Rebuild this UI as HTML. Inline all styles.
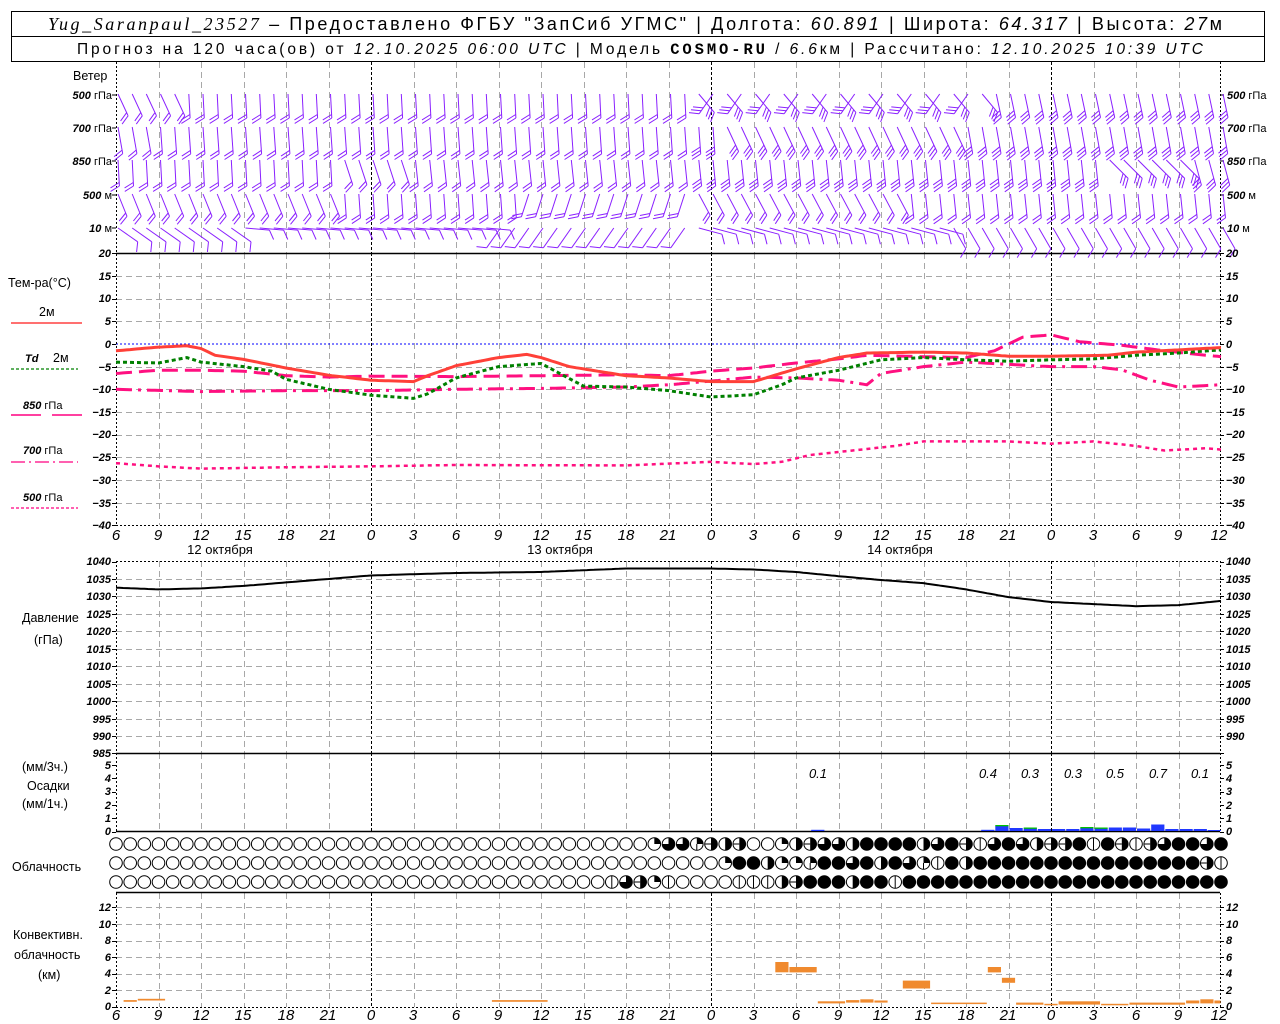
<!DOCTYPE html>
<html><head><meta charset="utf-8">
<style>
html,body{margin:0;padding:0;background:#fff;}
svg{display:block;}
text{font-family:"Liberation Sans",sans-serif;fill:#000;}
.ax{font-size:11px;font-style:italic;font-weight:bold;}
.hr{font-size:15px;font-style:italic;}
.lb{font-size:12.5px;}
</style></head>
<body>
<svg id="sv" width="1280" height="1024" viewBox="0 0 1280 1024">
<rect width="1280" height="1024" fill="#fff"/>
<g id="g"></g>
<!-- header -->
<rect x="11.5" y="11.5" width="1253" height="50" fill="none" stroke="#000"/>
<line x1="11.5" y1="36.5" x2="1264.5" y2="36.5" stroke="#000"/>
<text x="48" y="30" font-size="18" textLength="1174" lengthAdjust="spacing"><tspan font-family="Liberation Serif" font-style="italic">Yug_Saranpaul_23527</tspan> – Предоставлено ФГБУ "ЗапСиб УГМС" | Долгота: <tspan font-style="italic">60.891</tspan> | Широта: <tspan font-style="italic">64.317</tspan> | Высота: <tspan font-style="italic">27</tspan>м</text>
<text x="77" y="54" font-size="15.5" textLength="1126" lengthAdjust="spacing">Прогноз на 120 часа(ов) от <tspan font-style="italic">12.10.2025 06:00 UTC</tspan>  | Модель <tspan font-family="Liberation Mono" font-weight="bold">COSMO-RU</tspan> / <tspan font-style="italic">6.6</tspan>км | Рассчитано: <tspan font-style="italic">12.10.2025 10:39 UTC</tspan></text>

<!-- wind labels -->
<text class="lb" x="73" y="80">Ветер</text>
<g class="ax" text-anchor="end">
<text x="112" y="99">500 <tspan font-style="normal" font-weight="normal">гПа</tspan></text>
<text x="112" y="132">700 <tspan font-style="normal" font-weight="normal">гПа</tspan></text>
<text x="112" y="165">850 <tspan font-style="normal" font-weight="normal">гПа</tspan></text>
<text x="112" y="199">500 <tspan font-style="normal" font-weight="normal">м</tspan></text>
<text x="112" y="232">10  <tspan font-style="normal" font-weight="normal">м</tspan></text>
</g>
<g class="ax">
<text x="1227" y="99">500 <tspan font-style="normal" font-weight="normal">гПа</tspan></text>
<text x="1227" y="132">700 <tspan font-style="normal" font-weight="normal">гПа</tspan></text>
<text x="1227" y="165">850 <tspan font-style="normal" font-weight="normal">гПа</tspan></text>
<text x="1227" y="199">500 <tspan font-style="normal" font-weight="normal">м</tspan></text>
<text x="1227" y="232">10  <tspan font-style="normal" font-weight="normal">м</tspan></text>
</g>

<!-- temp legend -->
<text class="lb" x="8" y="287" font-size="13">Тем-ра(°С)</text>
<text class="lb" x="39" y="316" font-size="11">2м</text>
<line x1="11" y1="323" x2="82" y2="323" stroke="#ff4040" stroke-width="1.5"/>
<text x="25" y="362" font-size="11" font-style="italic" font-weight="bold" font-family="Liberation Serif">Td</text><text class="lb" x="53" y="362" font-size="11">2м</text>
<line x1="11" y1="369" x2="78" y2="369" stroke="#008000" stroke-width="1.2" stroke-dasharray="3,2"/>
<text class="ax" x="23" y="409">850 <tspan font-style="normal" font-weight="normal">гПа</tspan></text>
<line x1="11" y1="415" x2="41" y2="415" stroke="#ff0080" stroke-width="1.5"/><line x1="52" y1="415" x2="82" y2="415" stroke="#ff0080" stroke-width="1.5"/>
<text class="ax" x="23" y="454">700 <tspan font-style="normal" font-weight="normal">гПа</tspan></text>
<line x1="11" y1="462" x2="78" y2="462" stroke="#ff0080" stroke-width="1.2" stroke-dasharray="14,4,2,4"/>
<text class="ax" x="23" y="501">500 <tspan font-style="normal" font-weight="normal">гПа</tspan></text>
<line x1="11" y1="508" x2="78" y2="508" stroke="#ff0080" stroke-width="1.2" stroke-dasharray="3,2"/>

<!-- temp axis labels -->
<g class="ax" text-anchor="end">
<text x="111" y="257">20</text><text x="111" y="280">15</text><text x="111" y="302">10</text><text x="111" y="325">5</text><text x="111" y="348">0</text><text x="111" y="371">−5</text><text x="111" y="393">−10</text><text x="111" y="416">−15</text><text x="111" y="438">−20</text><text x="111" y="461">−25</text><text x="111" y="484">−30</text><text x="111" y="507">−35</text><text x="111" y="529">−40</text>
</g>
<g class="ax">
<text x="1226" y="257">20</text><text x="1226" y="280">15</text><text x="1226" y="302">10</text><text x="1226" y="325">5</text><text x="1226" y="348">0</text><text x="1226" y="371">−5</text><text x="1226" y="393">−10</text><text x="1226" y="416">−15</text><text x="1226" y="438">−20</text><text x="1226" y="461">−25</text><text x="1226" y="484">−30</text><text x="1226" y="507">−35</text><text x="1226" y="529">−40</text>
</g>
<!-- hour labels temp -->
<g class="hr" text-anchor="middle">
<text x="116" y="540">6</text><text x="158" y="540">9</text><text x="201" y="540">12</text><text x="243" y="540">15</text><text x="286" y="540">18</text><text x="328" y="540">21</text><text x="371" y="540">0</text><text x="413" y="540">3</text><text x="456" y="540">6</text><text x="498" y="540">9</text><text x="541" y="540">12</text><text x="583" y="540">15</text><text x="626" y="540">18</text><text x="668" y="540">21</text><text x="711" y="540">0</text><text x="753" y="540">3</text><text x="796" y="540">6</text><text x="838" y="540">9</text><text x="881" y="540">12</text><text x="923" y="540">15</text><text x="966" y="540">18</text><text x="1008" y="540">21</text><text x="1051" y="540">0</text><text x="1093" y="540">3</text><text x="1136" y="540">6</text><text x="1178" y="540">9</text><text x="1219" y="540">12</text>
</g>
<g font-size="13" text-anchor="middle">
<text x="220" y="554">12 октября</text><text x="560" y="554">13 октября</text><text x="900" y="554">14 октября</text>
</g>

<!-- pressure -->
<text class="lb" x="22" y="622">Давление</text>
<text class="lb" x="34" y="644">(гПа)</text>
<g class="ax" text-anchor="end">
<text x="111" y="565">1040</text><text x="111" y="583">1035</text><text x="111" y="600">1030</text><text x="111" y="618">1025</text><text x="111" y="635">1020</text><text x="111" y="653">1015</text><text x="111" y="670">1010</text><text x="111" y="688">1005</text><text x="111" y="705">1000</text><text x="111" y="723">995</text><text x="111" y="740">990</text><text x="111" y="757">985</text>
</g>
<g class="ax">
<text x="1226" y="565">1040</text><text x="1226" y="583">1035</text><text x="1226" y="600">1030</text><text x="1226" y="618">1025</text><text x="1226" y="635">1020</text><text x="1226" y="653">1015</text><text x="1226" y="670">1010</text><text x="1226" y="688">1005</text><text x="1226" y="705">1000</text><text x="1226" y="723">995</text><text x="1226" y="740">990</text>
</g>

<!-- precip -->
<text class="lb" x="22" y="771">(мм/3ч.)</text>
<text class="lb" x="27" y="790">Осадки</text>
<text class="lb" x="22" y="808">(мм/1ч.)</text>
<g class="ax" text-anchor="end">
<text x="111" y="769">5</text><text x="111" y="782">4</text><text x="111" y="795">3</text><text x="111" y="809">2</text><text x="111" y="822">1</text><text x="111" y="835">0</text>
</g>
<g class="ax">
<text x="1226" y="769">5</text><text x="1226" y="782">4</text><text x="1226" y="795">3</text><text x="1226" y="809">2</text><text x="1226" y="822">1</text><text x="1226" y="835">0</text>
</g>
<g font-size="13" font-style="italic" text-anchor="middle">
<text x="818" y="778">0.1</text><text x="988" y="778">0.4</text><text x="1030" y="778">0.3</text><text x="1073" y="778">0.3</text><text x="1115" y="778">0.5</text><text x="1158" y="778">0.7</text><text x="1200" y="778">0.1</text>
</g>

<text class="lb" x="12" y="871">Облачность</text>

<!-- conv -->
<text class="lb" x="13" y="939">Конвективн.</text>
<text class="lb" x="14" y="959">облачность</text>
<text class="lb" x="38" y="979">(км)</text>
<g class="ax" text-anchor="end">
<text x="111" y="911">12</text><text x="111" y="928">10</text><text x="111" y="944">8</text><text x="111" y="961">6</text><text x="111" y="977">4</text><text x="111" y="994">2</text><text x="111" y="1010">0</text>
</g>
<g class="ax">
<text x="1226" y="911">12</text><text x="1226" y="928">10</text><text x="1226" y="944">8</text><text x="1226" y="961">6</text><text x="1226" y="977">4</text><text x="1226" y="994">2</text><text x="1226" y="1010">0</text>
</g>
<g class="hr" text-anchor="middle">
<text x="116" y="1020">6</text><text x="158" y="1020">9</text><text x="201" y="1020">12</text><text x="243" y="1020">15</text><text x="286" y="1020">18</text><text x="328" y="1020">21</text><text x="371" y="1020">0</text><text x="413" y="1020">3</text><text x="456" y="1020">6</text><text x="498" y="1020">9</text><text x="541" y="1020">12</text><text x="583" y="1020">15</text><text x="626" y="1020">18</text><text x="668" y="1020">21</text><text x="711" y="1020">0</text><text x="753" y="1020">3</text><text x="796" y="1020">6</text><text x="838" y="1020">9</text><text x="881" y="1020">12</text><text x="923" y="1020">15</text><text x="966" y="1020">18</text><text x="1008" y="1020">21</text><text x="1051" y="1020">0</text><text x="1093" y="1020">3</text><text x="1136" y="1020">6</text><text x="1178" y="1020">9</text><text x="1219" y="1020">12</text>
</g>
</svg>
<script>
(function(){
var X=function(h){return 116+h*14.1667;};
var s='';
function L(x1,y1,x2,y2,c,w,d){s+='<line x1="'+x1+'" y1="'+y1+'" x2="'+x2+'" y2="'+y2+'" stroke="'+c+'" stroke-width="'+(w||1)+'"'+(d?' stroke-dasharray="'+d+'"':'')+'/>';}
var spans=[[62,253],[253,525],[561,753],[753,831],[893,1007]];
var k,h,x,y,i;
for(k=0;k<=26;k++){h=3*k;x=Math.round(X(h))+0.5;var day=(h==18||h==42||h==66);
 if(k==0||k==26)continue;
 spans.forEach(function(sp){L(x,sp[0],x,sp[1],day?'#000':'#a8a8a8',1,day?'3,2':'6,4');});}
var Ty=function(t){return 253.3+(20-t)*4.533;};
for(k=15;k>=-35;k-=5){y=Math.round(Ty(k))+0.5; if(k==0)continue; L(116,y,1220,y,'#a8a8a8',1,'6,4');}
L(116,344,1220,344,'#0000ff',1,'2,2');
L(116,253.5,1220,253.5,'#000',1.5);
L(116,525.5,1220,525.5,'#000',1,'2,2');
var Py=function(p){return 561.5+(1040-p)*3.49;};
for(k=1035;k>=990;k-=5){y=Math.round(Py(k))+0.5;L(116,y,1220,y,'#a8a8a8',1,'6,4');}
L(116,561.5,1220,561.5,'#000',1,'2,2');
L(116,753.5,1220,753.5,'#000',1.5);
L(116,831.5,1220,831.5,'#000',1.5);
L(116,892.5,1220,892.5,'#000',1.5);
var Cy=function(c){return 1006.7-c*8.27;};
for(k=2;k<=12;k+=2){y=Math.round(Cy(k))+0.5;L(116,y,1220,y,'#a8a8a8',1,'6,4');}
L(116,1007.5,1220,1007.5,'#000',1,'2,2');
[116.5,1220.5].forEach(function(ax){
 [[62,525],[561,831],[893,1007]].forEach(function(sp){L(ax,sp[0],ax,sp[1],'#000',1,'2,2');});});
function ticks(vals,fy){vals.forEach(function(v){var yy=Math.round(fy(v))+0.5;L(112,yy,116,yy,'#000');L(1220,yy,1224,yy,'#000');});}
ticks([20,15,10,5,0,-5,-10,-15,-20,-25,-30,-35,-40],Ty);
ticks([1040,1035,1030,1025,1020,1015,1010,1005,1000,995,990,985],Py);
ticks([0,1,2,3,4,5],function(v){return 831.5-v*13.3;});
ticks([0,2,4,6,8,10,12],Cy);
[95,128,161,195,228].forEach(function(yy){L(112,yy,116,yy,'#000');L(1220,yy,1224,yy,'#000');});

function interp(a,h){for(var j=0;j<a.length-1;j++){if(h>=a[j][0]&&h<=a[j+1][0]){var f=(h-a[j][0])/(a[j+1][0]-a[j][0]||1);return a[j][1]+f*(a[j+1][1]-a[j][1]);}}return a[a.length-1][1];}
function curve(a,fy,c,w,d){var p=[];for(var hh=a[0][0];hh<=a[a.length-1][0]+0.001;hh+=0.25){p.push(X(hh).toFixed(1)+','+fy(interp(a,hh)).toFixed(1));}
 s+='<polyline fill="none" points="'+p.join(' ')+'" stroke="'+c+'" stroke-width="'+w+'"'+(d?' stroke-dasharray="'+d+'"':'')+'/>';}
var t500=[[0,-26.3],[3,-27],[6,-27.5],[12,-27.2],[18,-27],[24,-26.7],[36,-26.8],[42,-26],[45,-26.5],[47,-26],[49,-24.5],[52,-23.5],[55,-22.5],[57,-21.5],[63,-21.5],[66,-22],[69,-21.5],[72,-22.5],[74,-23.5],[77,-23],[78,-23.3]];
var t700=[[0,-10],[6,-10.5],[12,-10.3],[18,-10.3],[24,-10],[30,-9.8],[36,-9.5],[39,-9],[42,-8.2],[45,-7.3],[48,-7.5],[51,-8],[53,-9],[54,-6.5],[57,-5],[60,-4],[63,-4.5],[66,-5],[69,-5],[71,-5.7],[73,-8],[75,-9.5],[78,-9]];
var t850=[[0,-6.5],[3,-5.8],[6,-5.8],[9,-6],[12,-7],[15,-7.3],[18,-7.1],[24,-7.2],[30,-7],[36,-6.8],[39,-7],[42,-6],[45,-5.3],[48,-4.2],[51,-3.3],[53,-2.5],[57,-2.8],[60,-3],[62,-1.5],[64,1.5],[66,2],[68,0.5],[71,-0.3],[74,-1.5],[76,-2.2],[78,-2.8]];
var td=[[0,-4],[3,-4.2],[5,-3],[6,-4],[9,-5],[11,-6],[12,-7.8],[15,-10],[18,-11.3],[21,-12],[22,-11],[24,-7.5],[27,-5],[30,-4.3],[33,-9.3],[36,-9.5],[39,-10.3],[42,-11.7],[45,-11.2],[47,-9],[48,-7.5],[51,-5.8],[54,-3.5],[57,-3],[60,-3.5],[63,-3.8],[66,-3.5],[69,-3.3],[72,-2.5],[75,-2],[78,-1.3]];
var t2=[[0,-1.5],[3,-0.7],[5,-0.4],[6,-1],[7,-2.5],[9,-3.4],[12,-5.3],[15,-6.9],[18,-8],[21,-8.3],[22,-7],[24,-4.8],[27,-3],[29,-2.3],[30,-3],[32,-5],[36,-7],[39,-7.5],[42,-8.3],[45,-8.3],[48,-5.5],[51,-3],[53,-2],[57,-1.8],[60,-2],[63,-2.7],[66,-2.7],[70,-2.5],[72,-1.8],[75,-1.3],[78,-0.8]];
curve(t500,Ty,'#ff1080',2.5,'4,4');
curve(t700,Ty,'#ff1080',3,'16,6,3,6');
curve(t850,Ty,'#ff1080',3,'16,7');
curve(td,Ty,'#008000',3,'4,3');
curve(t2,Ty,'#ff4038',3);
var pr=[[0,1032.5],[3,1032],[6,1032.3],[9,1033],[12,1034],[15,1035],[18,1036],[24,1036.7],[30,1037],[36,1038],[42,1038],[45,1037.7],[48,1037],[51,1035.8],[54,1034.7],[57,1033.8],[60,1032],[63,1029.8],[66,1028.4],[69,1027.8],[72,1027.2],[75,1027.5],[78,1028.7]];
curve(pr,Py,'#000',2);
// precip bars
var pb=[[49,1.2,0],[61,1.2,0],[62,5,1],[63,3,0],[64,2.5,1],[65,2,0],[66,2,0],[67,2,0],[68,3,1],[69,2.5,1],[70,3.5,0],[71,3.5,0],[72,2.5,0],[73,6.5,0],[74,2,0],[75,2,0],[76,2,0],[77,1,0]];
pb.forEach(function(b){var x1=X(b[0])+1,x2=X(b[0]+1);s+='<rect x="'+x1.toFixed(1)+'" y="'+(831-b[1]).toFixed(1)+'" width="'+(x2-x1).toFixed(1)+'" height="'+b[1]+'" fill="#2038ff"/>';
 if(b[2])s+='<rect x="'+x1.toFixed(1)+'" y="'+(830-b[1]).toFixed(1)+'" width="'+(x2-x1).toFixed(1)+'" height="1.3" fill="#00c000"/>';});
// conv bars
var cb=[[0.5,1.5,0.6,0.8],[1.5,3.5,0.75,0.95],[26.5,30.5,0.6,0.8],[46.5,47.5,4.15,5.4],[47.5,49.5,4.15,4.8],[49.5,51.5,0.4,0.65],[51.5,52.5,0.5,0.8],[52.5,53.5,0.5,0.9],[53.5,54.5,0.5,0.75],[55.5,57.5,2.2,3.15],[57.5,61.5,0.35,0.5],[61.5,62.5,4.15,4.8],[62.5,63.5,2.9,3.5],[63.5,65.5,0.25,0.5],[65.5,66.5,0.2,0.35],[66.5,69.5,0.25,0.65],[69.5,71.5,0.2,0.35],[71.5,75.5,0.25,0.5],[75.5,76.5,0.4,0.75],[76.5,77.5,0.4,0.9],[77.5,78,0.4,0.75]];
cb.forEach(function(b){var x1=X(b[0])+0.5,x2=X(b[1])-0.5,y1=Cy(b[3]),y2=Cy(b[2]);s+='<rect x="'+x1.toFixed(1)+'" y="'+y1.toFixed(1)+'" width="'+(x2-x1).toFixed(1)+'" height="'+Math.max(1.5,y2-y1).toFixed(1)+'" fill="#f08a2e"/>';});
// clouds
function row(def){var a=[];for(var q=0;q<=78;q++)a.push(0);for(var key in def)a[+key]=def[key];return a;}
var r1=row({38:2,39:6,40:6,41:3,42:5,43:4,44:5,47:2,48:4,49:5,50:6,51:6,52:4,53:8,54:8,55:8,56:8,57:4,58:6,59:8,60:5,61:1,62:6,63:8,64:6,65:4,66:5,67:5,68:8,69:1,70:8,71:5,72:1,73:5,74:6,75:8,76:8,77:6,78:8});
var d2={43:2,44:8,45:8,46:4,47:2,48:2,49:3,50:8,51:8,52:6,53:8,54:4,55:8,56:6,57:3,58:1,59:8,60:4};for(i=61;i<=76;i++)d2[i]=8;d2[77]=5;d2[78]=1;
var r2=row(d2);
var d3={35:1,36:6,37:5,38:2,39:1,44:1,45:1,46:1,47:4,48:5,49:8,50:8,51:8,52:4,53:8,54:8,55:1};for(i=56;i<=78;i++)d3[i]=8;
var r3=row(d3);
var R=6.3;
[[r1,844],[r2,863],[r3,882]].forEach(function(rw){var a=rw[0],cy=rw[1];
 for(var q=0;q<=78;q++){var cx=X(q),t=a[q];
  s+='<circle cx="'+cx.toFixed(1)+'" cy="'+cy+'" r="'+R+'" fill="'+(t==8||t==7?'#000':'#fff')+'" stroke="#000" stroke-width="1"/>';
  var c=cx.toFixed(1);
  if(t==2||t==3)s+='<path d="M'+c+','+cy+' L'+c+','+(cy-R)+' A'+R+','+R+' 0 0 1 '+(cx+R).toFixed(1)+','+cy+' Z" fill="#000"/>';
  if(t==3)L(c,cy,c,cy+R,'#000');
  if(t==4||t==5)s+='<path d="M'+c+','+(cy-R)+' A'+R+','+R+' 0 0 1 '+c+','+(cy+R)+' Z" fill="#000"/>';
  if(t==5)L((cx-R).toFixed(1),cy,c,cy,'#000');
  if(t==6)s+='<path d="M'+c+','+cy+' L'+c+','+(cy-R)+' A'+R+','+R+' 0 1 1 '+(cx-R).toFixed(1)+','+cy+' Z" fill="#000"/>';
  if(t==1)L(c,cy-R,c,cy+R,'#000');
  if(t==7)L(c,cy-R+1,c,cy+R-1,'#fff',1.5);
 }});
// wind barbs
function ang(r,h){
 if(r==0){if(h<5)return 25;if(h<41)return 3;if(h<62)return (h%2?40:-35);return 12;}
 if(r==1){if(h<3)return 10;if(h<43)return 4;if(h<60)return 25;return 10;}
 if(r==2){if(h<16)return 3;if(h<21)return 18;if(h<70)return 6;if(h<76)return 45;return 15;}
 if(r==3){if(h<16)return 22;if(h<29)return 4;if(h<41)return -18;if(h<56)return 28;return 6;}
 if(h<9)return 55;if(h<27)return 85;if(h<41)return -35;if(h<59)return 75;return 30;}
var rows=[94,127,160,194,228],lens=[24,27,26,24,24];
var W='#8a20ff';
for(var r=0;r<5;r++){for(h=0;h<=78;h++){
 var th=ang(r,h)*Math.PI/180,dx=Math.sin(th),dy=Math.cos(th),px=Math.cos(th),py=-Math.sin(th);
 var x0=X(h)+2,y0=rows[r],ln=lens[r];
 var xb=x0+dx*ln,yb=y0+dy*ln;
 L(x0.toFixed(1),y0,xb.toFixed(1),yb.toFixed(1),W,1);
 var nf=(r==4)?1:(r<3&&h>40?3:2);
 for(var f=0;f<nf;f++){var sx=xb-dx*f*3.5,sy=yb-dy*f*3.5;
  var fx=sx-9*px+5*dx,fy=sy-9*py+5*dy;
  L(sx.toFixed(1),sy.toFixed(1),fx.toFixed(1),fy.toFixed(1),W,1);}
}}
document.getElementById('g').innerHTML=s;
})();
</script>
</body></html>
